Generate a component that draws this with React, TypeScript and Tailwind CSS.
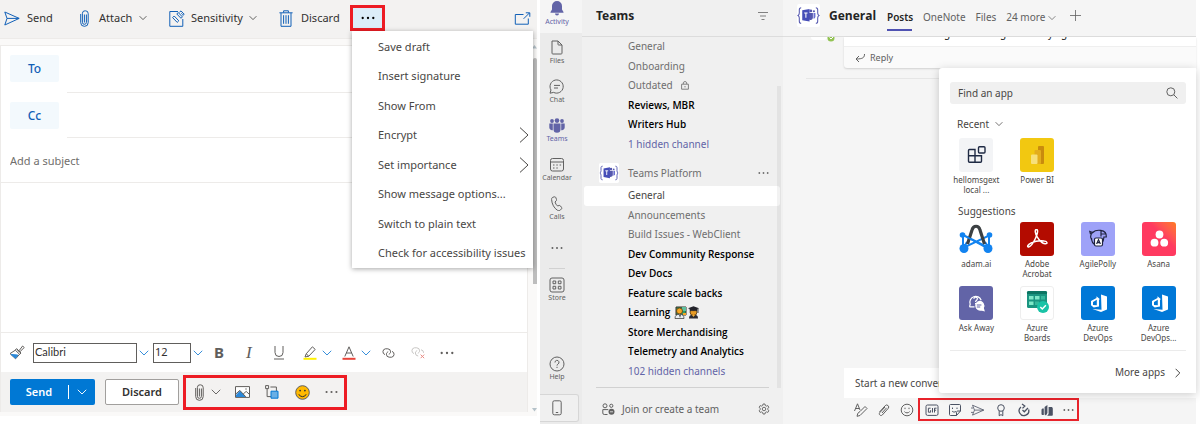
import React from "react";

type IconProps = {
  w: number;
  h: number;
  box?: string;
  className?: string;
  sw?: number;
  children: React.ReactNode;
};

function Icon({ w, h, box, className = "", sw = 1, children }: IconProps) {
  return (
    <svg
      width={w}
      height={h}
      viewBox={box ?? `0 0 ${w} ${h}`}
      fill="none"
      stroke="currentColor"
      strokeWidth={sw}
      className={`shrink-0 ${className}`}
      aria-hidden="true"
    >
      {children}
    </svg>
  );
}

const Chevron = ({ className = "", size = 8 }: { className?: string; size?: number }) => (
  <Icon w={size} h={size} box="0 0 8 8" className={className} sw={0.75}>
    <path d="M.6 2.2 4 5.6 7.4 2.2" />
  </Icon>
);

const Dots = ({ className = "", w = 14 }: { className?: string; w?: number }) => (
  <Icon w={w} h={4} box="0 0 14 4" className={className}>
    <g fill="currentColor" stroke="none">
      <circle cx="1.7" cy="2" r="1.15" />
      <circle cx="7" cy="2" r="1.15" />
      <circle cx="12.3" cy="2" r="1.15" />
    </g>
  </Icon>
);

const Clip = ({ className = "" }: { className?: string }) => (
  <Icon w={9} h={17} className={className} sw={1}>
    <path d="M6.4 4.5v7.8a2 2 0 0 1-4 0V3.4a2.6 2.6 0 0 1 2.6-2.6h.4A2.8 2.8 0 0 1 8.2 3.6v9a3.6 3.6 0 0 1-7.5 0V4M4.4 4.5v8" />
  </Icon>
);

/* ---------------------------- Mail composer ---------------------------- */

const menuItems = [
  { label: "Save draft" },
  { label: "Insert signature" },
  { label: "Show From" },
  { label: "Encrypt", sub: true },
  { label: "Set importance", sub: true },
  { label: "Show message options..." },
  { label: "Switch to plain text" },
  { label: "Check for accessibility issues" },
];

function MoreMenu() {
  return (
    <ul className="absolute left-[2px] top-[31px] z-10 grid h-[237px] w-[181px] auto-rows-fr bg-white pt-px shadow-[0_1px_5px_rgba(0,0,0,0.35)]">
      {menuItems.map((m) => (
        <li key={m.label} className="flex">
          <button className="flex w-full items-center justify-between whitespace-nowrap pl-[26px] pr-[9px] text-left text-[11px] text-[#484644]">
            {m.label}
            {m.sub && (
              <Icon w={10} h={16} sw={1} className="-mr-[3px]">
                <path d="M1 .6 9 8 1 15.4" />
              </Icon>
            )}
          </button>
        </li>
      ))}
    </ul>
  );
}

function MailToolbar() {
  return (
    <header className="flex h-[38px] items-start bg-[#f3f2f1] pl-1 text-[11px] text-[#323130]">
      <button className="flex h-9 w-[76px] items-center gap-[7px]">
        <Icon w={16} h={15} className="text-[#1160b7]">
          <path d="M.8 1 15.2 7.4.8 14 3 7.4zM3 7.4h12" />
        </Icon>
        Send
      </button>
      <button className="flex h-9 w-[89px] items-center gap-[7px]">
        <span className="flex w-3">
          <Clip className="text-[#1160b7]" />
        </span>
        Attach
        <Chevron />
      </button>
      <button className="flex h-9 w-[110px] items-center gap-[6px]">
        <Icon w={16} h={17} className="text-[#1160b7]">
          <path d="M9 1.5H.8v14.8h13V9" />
          <path d="m3.6 7.6 1.6-1.6 4.6 4.8-1.6 1.6zM7.8 4l1.4-1.5 4.2 4.4L12 8.3zM10.4 2.3 12 .9l3.2 3.4-1.6 1.4M12.3 3.3l1.4 1.4" />
        </Icon>
        Sensitivity
        <Chevron />
      </button>
      <button className="flex h-9 w-[71px] items-center gap-[8px]">
        <Icon w={14} h={17} className="text-[#1160b7]">
          <path d="M.4 2.8h13.2M4.6 2.6V.8h4.8v1.8M2 3v13.3h10V3M4.6 5.2v8.6M7 5.2v8.6M9.4 5.2v8.6" />
        </Icon>
        Discard
      </button>
      <div className="relative pt-[5px]">
        <button
          aria-label="More options"
          className="flex h-[26px] w-[35px] items-center justify-center border-[3px] border-[#ed1c24] bg-[#dcedf9]"
        >
          <Dots className="text-black" />
        </button>
        <MoreMenu />
      </div>
      <button aria-label="Open in new window" className="ml-auto mr-[6px] flex h-9 items-center">
        <Icon w={17} h={13} className="text-[#1160b7]">
          <path d="M9.5 2.5H1.3v9.7h13V6.500M9.600 6.800 15.400 1M11.800.8h4v4" />
        </Icon>
      </button>
    </header>
  );
}

function FormatBar() {
  return (
    <div className="flex h-10 items-center border-t border-[#edebe9] pl-2 text-[#605e5c]">
      <button aria-label="Format painter" className="w-6">
        <Icon w={16} h={15}>
          <path d="m8 4.5 3 3.2M10 5.8 13.6 1l1.6 1.5-4.4 4.4M7.6 3.6 12 8l-1.3 1.4-4.5-4.3zM6 5.4 1 8.6l5.6 5.2 4-4.6" />
          <path d="m2 9.4 4.5 3.8 2.4-3.1z" fill="#2b88d8" stroke="#2b88d8" />
        </Icon>
      </button>
      <label className="flex w-[120px] items-center gap-[2px] text-[#2b88d8]">
        <select
          aria-label="Font"
          className="h-5 w-[104px] appearance-none border border-[#605e5c] bg-white px-px font-['Lato','Carlito',sans-serif] text-[11px] text-[#323130]"
        >
          <option>Calibri</option>
        </select>
        <Chevron size={10} />
      </label>
      <label className="flex w-[61px] items-center gap-[2px] text-[#2b88d8]">
        <select
          aria-label="Font size"
          className="h-5 w-[38px] appearance-none border border-[#605e5c] bg-white px-px text-[11px] text-[#323130]"
        >
          <option>12</option>
        </select>
        <Chevron size={10} />
      </label>
      <button className="w-[30px] text-left text-[15px] font-bold">B</button>
      <button className="w-[30px] pl-[2px] text-left font-['Liberation_Serif',serif] text-[17px] italic">I</button>
      <button aria-label="Underline" className="w-[29px]">
        <Icon w={10} h={14}>
          <path d="M1 0v6.500a4 4 0 0 0 8 0V0M0 13h10" />
        </Icon>
      </button>
      <button aria-label="Highlight" className="w-[19px]">
        <Icon w={14} h={14}>
          <path d="m3.200 7.800 6.200-7 2.800 2.600-6.400 6.800zM3.200 7.800 2 11l3.800-.8" />
          <path d="M.5 12.800h13" stroke="#fff100" strokeWidth="2" />
        </Icon>
      </button>
      <Chevron size={10} className="text-[#2b88d8]" />
      <button aria-label="Font color" className="ml-[10px] w-[19px]">
        <Icon w={14} h={14}>
          <path d="M2.800 10.500 7 .8l4.200 9.700M4.200 7h5.600" />
          <path d="M.5 12.800h13" stroke="#e8443a" strokeWidth="2" />
        </Icon>
      </button>
      <Chevron size={10} className="text-[#2b88d8]" />
      <button aria-label="Insert link" className="ml-[10px] w-[29px]">
        <Icon w={15} h={10}>
          <path d="M4 6.600a3 3 0 0 1 .4-5.800h2.400a3 3 0 0 1 2.800 3c0 1.300-.8 2-1.800 2.400" />
          <path d="M11 3.400a3 3 0 0 1-.4 5.800H8.200a3 3 0 0 1-2.800-3c0-1.300.8-2 1.800-2.400" />
        </Icon>
      </button>
      <button aria-label="Remove link" className="w-[30px] text-[#c8c6c4]">
        <Icon w={15} h={13}>
          <path d="M4 7.600a3 3 0 0 1 .4-5.800h2.400a3 3 0 0 1 2.800 3c0 1.300-.8 2-1.800 2.400" />
          <path d="M13.600 6.800a3 3 0 0 0-2.600-3M8.200 10a3 3 0 0 1-2.800-3c0-1.300.8-2 1.800-2.400" />
          <path d="m10.600 8.600 3.600 3.600M14.200 8.600l-3.600 3.600" stroke="#e88a84" />
        </Icon>
      </button>
      <button aria-label="More formatting">
        <Dots />
      </button>
    </div>
  );
}

function SendBar() {
  return (
    <div className="flex h-10 items-center bg-[#f3f2f1] pl-[9px] text-[11px] font-semibold">
      <div className="flex h-[26px] w-[85px] items-center rounded-[2px] bg-[#0078d4] text-white">
        <button className="h-[14px] w-[59px] border-r border-white text-center leading-[14px]">Send</button>
        <button aria-label="Send options" className="flex flex-1 justify-center">
          <Chevron size={10} />
        </button>
      </div>
      <button className="ml-[10px] h-[26px] w-[74px] rounded-[2px] border border-[#a19f9d] bg-white text-[#323130]">
        Discard
      </button>
      <div className="ml-1 flex h-[35px] w-[164px] items-center border-[3px] border-[#ed1c24] pl-[9px] text-[#605e5c]">
        <button aria-label="Attach file" className="flex w-[16px]">
          <Clip />
        </button>
        <Chevron size={10} />
        <button aria-label="Insert picture" className="ml-[14px] flex w-[30px]">
          <Icon w={15} h={12}>
            <path d="M.5.6h14v10.800H.5z" fill="#fff" />
            <path d="m1 9 4-4.400 6 6.400H1z" fill="#2b88d8" stroke="none" />
            <path d="m.8 8 4-3.600 6 6.400M8.200 8l3-2.600 3 2.800" />
            <circle cx="11" cy="3" r=".7" fill="currentColor" stroke="none" />
          </Icon>
        </button>
        <button aria-label="Loop components" className="flex w-[30px]">
          <Icon w={14} h={14}>
            <path d="M.6.6h3v3h-3zM2.100 4v7.600H6M5.400 2h6v4" />
            <path d="M6 6.200h7v7H6z" fill="#69afe5" stroke="#0078d4" />
          </Icon>
        </button>
        <button aria-label="Insert emoji" className="flex w-[30px]">
          <Icon w={15} h={15}>
            <circle cx="7.500" cy="7.500" r="6.800" fill="#ffb900" stroke="#605e5c" />
            <path d="M3.800 9.200a4 4 0 0 0 7.400 0" stroke="#323130" />
            <circle cx="5.100" cy="5.600" r=".9" fill="#323130" stroke="none" />
            <circle cx="9.900" cy="5.600" r=".9" fill="#323130" stroke="none" />
          </Icon>
        </button>
        <button aria-label="More">
          <Dots w={13} />
        </button>
      </div>
    </div>
  );
}

function MailComposer() {
  return (
    <section className="flex flex-col bg-[#faf9f8] pb-1 font-['Noto_Sans','Open_Sans',sans-serif]">
      <MailToolbar />
      <div className="flex border-t border-[#edebe9] pt-[6px]">
        <div className="min-w-0 flex-1 border-l border-r border-t border-[#edebe9] bg-white">
          <div className="flex pl-[9px] pt-[9px]">
            <button className="h-[27px] w-[49px] rounded-[2px] bg-[#f3f9fd] text-[12px] font-medium text-[#1160b7]">To</button>
            <input aria-label="To" className="ml-2 h-[38px] min-w-0 flex-1 border-b border-[#edebe9] outline-none" />
          </div>
          <div className="flex pl-[9px] pt-[9px]">
            <button className="h-[27px] w-[49px] rounded-[2px] bg-[#f3f9fd] text-[12px] font-medium text-[#1160b7]">Cc</button>
            <input aria-label="Cc" className="ml-2 h-9 min-w-0 flex-1 border-b border-[#edebe9] outline-none" />
          </div>
          <input
            aria-label="Subject"
            placeholder="Add a subject"
            className="block h-[45px] w-full border-b border-[#edebe9] pl-[9px] text-[11px] outline-none placeholder:text-[#706e6c]"
          />
          <textarea aria-label="Message" className="block h-[149px] w-full resize-none outline-none" />
          <FormatBar />
          <SendBar />
        </div>
        <div className="flex w-[9px] flex-col items-end">
          <svg width="5" height="4" className="text-[#b5c2c9]" aria-hidden="true">
            <path d="M0 3.5 2.5 0 5 3.5z" fill="currentColor" />
          </svg>
          <div className="mt-[9px] h-[226px] w-1 rounded-t-[2px] bg-[#bdbdbd]" />
          <svg width="5" height="4" className="mt-auto text-[#b5c2c9]" aria-hidden="true">
            <path d="M0 0h5L2.500 3.500z" fill="currentColor" />
          </svg>
        </div>
      </div>
    </section>
  );
}

/* -------------------------------- Teams -------------------------------- */

const railItems = [
  {
    label: "Files",
    icon: <path d="M3 1h6l4 4v8.2c0 .5-.4.8-.8.8H3.8c-.5 0-.8-.3-.8-.8zM9 1v3.4c0 .4.2.6.6.6H13" />,
  },
  {
    label: "Chat",
    icon: <path d="M1 14.2 2 11A6.6 6.6 0 1 1 4.6 13.4zM5 6.4h6M5 9h4" />,
  },
  {
    label: "Teams",
    active: true,
    icon: (
      <g fill="currentColor" stroke="none">
        <circle cx="8" cy="2.600" r="2.300" />
        <circle cx="3" cy="3" r="1.900" />
        <circle cx="13" cy="3" r="1.900" />
        <path d="M4.500 5.600h7v5.600a3.500 3.500 0 0 1-7 0zM.3 5.600h3.500v6.600C1.800 12.600.3 11.200.3 9.600zM15.700 5.600h-3.500v6.600c2 .4 3.500-1 3.500-2.600z" />
      </g>
    ),
  },
  {
    label: "Calendar",
    icon: (
      <>
        <rect x="1.500" y="1.500" width="13" height="12.500" rx="2" />
        <path d="M1.500 5h13M4 8h1.500M7.300 8h1.500M10.600 8h1.500M4 11h1.500M7.300 11h1.500" />
      </>
    ),
  },
  {
    label: "Calls",
    icon: (
      <path d="M4 1.200 5.600.8c.6 0 1 .2 1.200.8l.7 1.900c.2.5 0 1-.4 1.400L6 6c.4 1.500 1.300 3 2.600 4l1.500-.5c.5-.2 1 0 1.300.4l1.200 1.600c.3.5.3 1-.1 1.400l-1 1c-.8.8-2 1-3 .4C5.200 12.300 2.800 8 2.600 3.600 2.500 2.400 3 1.500 4 1.200z" />
    ),
  },
];

function Rail() {
  return (
    <nav className="flex w-[42px] shrink-0 flex-col items-center bg-[#ebebeb] text-[7px] leading-[10px] text-[#616161]">
      <button className="flex h-[33px] w-full flex-col items-center justify-end bg-[#f5f5f5] pb-[6px] pr-2 text-[#6264a7]">
        <Icon w={14} h={15}>
          <path d="M7 0a5 5 0 0 1 5 5v3.500l1.500 2.500v.8H.5V11L2 8.500V5a5 5 0 0 1 5-5zM5 12.600h4a2 2 0 0 1-4 0z" fill="currentColor" stroke="none" />
        </Icon>
        <span className="mt-px">Activity</span>
      </button>
      {railItems.map((r) => (
        <button
          key={r.label}
          className={`flex h-[39px] w-full flex-col items-center pr-2 pt-[7px] ${r.active ? "text-[#6264a7]" : ""}`}
        >
          <Icon w={16} h={15}>
            {r.icon}
          </Icon>
          <span className="mt-px">{r.label}</span>
        </button>
      ))}
      <button aria-label="More apps" className="flex h-10 w-full items-center justify-center pr-2">
        <Dots w={12} />
      </button>
      <hr className="mr-2 w-4 border-[#d1d1d1]" />
      <button className="mt-[8px] flex w-full flex-col items-center pr-2">
        <Icon w={16} h={16}>
          <rect x="1" y="1" width="14" height="14" rx="2" />
          <path d="M4 4h2.700v2.700H4zM9.300 4H12v2.700H9.300zM4 9.300h2.700V12H4zM9.300 9.300H12V12H9.300z" />
        </Icon>
        Store
      </button>
      <button className="mt-auto flex w-full flex-col items-center pb-[12px] pr-2">
        <Icon w={16} h={16}>
          <circle cx="8" cy="8" r="7" />
          <path d="M6 6.500a2 2 0 1 1 3 1.600c-.7.400-1 .8-1 1.500M8 10.800v1.200" />
        </Icon>
        Help
      </button>
      <button
        aria-label="Get the mobile app"
        className="mb-[2px] flex h-7 w-[39px] items-center justify-center self-start rounded-r-[3px] border border-l-0 border-[#d6d6d6] bg-[#f0f0f0] pr-1"
      >
        <Icon w={10} h={16}>
          <rect x=".8" y=".8" width="8.400" height="14" rx="1.500" />
          <path d="M3.800 12.500h2.400" />
        </Icon>
      </button>
    </nav>
  );
}

const Lock = () => (
  <Icon w={8} h={9} className="text-[#808080]">
    <path d="M.6 3.200h6.800v5H.6zM2.300 3V1.800C2.300.2 5.700.2 5.700 1.800V3M4 5v1.400" />
  </Icon>
);

const LearnEmoji = () => (
  <svg width="26" height="13" viewBox="0 0 26 13" aria-hidden="true">
    <path d="M2 1h10v8H2z" fill="#2e9c68" stroke="#3a3029" />
    <path d="M8 1h4v4H8z" fill="#5fc0a0" />
    <circle cx="5.500" cy="5" r="3" fill="#f7a823" stroke="#5a3b13" strokeWidth=".8" />
    <path d="M1 12.500c0-3 1.500-4.200 4.500-4.200s4.500 1.200 4.500 4.200z" fill="#e9eef2" stroke="#444" strokeWidth=".8" />
    <path d="m5 9 1 3 1-3z" fill="#555" />
    <path d="M9 7h3v2H9z" fill="#f7a823" />
    <path d="M15 12.500c0-3 1.500-4 4.500-4s4.500 1 4.500 4z" fill="#2b2b33" />
    <circle cx="19.500" cy="6" r="3.500" fill="#e89b25" stroke="#4c3411" strokeWidth=".8" />
    <path d="M14 2.200 19.500.3 25 2.200 19.500 4.500z" fill="#24242b" />
    <path d="M16 3h7v1.600h-7zM24 2.500V7" fill="#24242b" stroke="#24242b" strokeWidth=".8" />
    <path d="m18 9 1.500 2L21 9z" fill="#f2b13d" />
  </svg>
);

const TeamLogo = ({ size }: { size: number }) => (
  <svg width={size} height={size} viewBox="0 0 22 22" className="shrink-0" aria-hidden="true">
    <rect width="22" height="22" rx="2" fill="#fff" />
    <path
      d="M4 3.500c-1.600 0-1.800.8-1.800 2v3c0 1.300-.4 2-1.200 2.500.8.500 1.200 1.200 1.200 2.500v3c0 1.200.2 2 1.800 2M18 3.500c1.600 0 1.800.8 1.800 2v3c0 1.300.4 2 1.200 2.500-.8.500-1.200 1.200-1.200 2.500v3c0 1.200-.2 2-1.800 2"
      fill="none"
      stroke="#5558af"
      strokeWidth="1"
    />
    <circle cx="13.200" cy="6.600" r="1.400" fill="#5558af" />
    <circle cx="16.200" cy="7" r="1" fill="#5558af" />
    <path d="M11 8.600h4.200v4.800a2.500 2.500 0 0 1-4.200 1.200z" fill="#5558af" />
    <path d="M15.800 8.600h1.800v3.800a2 2 0 0 1-1.800 1.600z" fill="#6a6fd0" />
    <path d="m5 6 7-1.200v12L5 15.500z" fill="#464eb8" />
    <path d="M6.900 8.600h3.200M8.500 8.600v4.600" stroke="#fff" strokeWidth="1" />
  </svg>
);

type Channel = { name: string; kind?: "bold" | "link" | "current"; icon?: React.ReactNode };

const topChannels: Channel[] = [
  { name: "General" },
  { name: "Onboarding" },
  { name: "Outdated", icon: <Lock /> },
  { name: "Reviews, MBR", kind: "bold" },
  { name: "Writers Hub", kind: "bold" },
  { name: "1 hidden channel", kind: "link" },
];

const platformChannels: Channel[] = [
  { name: "General", kind: "current" },
  { name: "Announcements" },
  { name: "Build Issues - WebClient" },
  { name: "Dev Community Response", kind: "bold" },
  { name: "Dev Docs", kind: "bold" },
  { name: "Feature scale backs", kind: "bold" },
  { name: "Learning", kind: "bold", icon: <LearnEmoji /> },
  { name: "Store Merchandising", kind: "bold" },
  { name: "Telemetry and Analytics", kind: "bold" },
  { name: "102 hidden channels", kind: "link" },
];

const channelStyle = {
  plain: "text-[#6e6e6e]",
  bold: "font-['Open_Sans','Noto_Sans',sans-serif] font-semibold text-black",
  link: "text-[#6264a7]",
  current: "rounded-[3px] bg-white text-[#484644]",
};

function ChannelList({ items, className }: { items: Channel[]; className: string }) {
  return (
    <ul className={`grid auto-rows-fr pl-[2px] pr-[3px] ${className}`}>
      {items.map((c) => (
        <li key={c.name} className="flex">
          <a
            href="#channel"
            className={`flex w-full items-center whitespace-nowrap pl-11 ${c.icon ? (c.kind ? "gap-1" : "gap-2") : ""} ${channelStyle[c.kind ?? "plain"]}`}
          >
            {c.name}
            {c.icon}
          </a>
        </li>
      ))}
    </ul>
  );
}

function TeamsPanel() {
  return (
    <aside className="relative flex w-[201px] shrink-0 flex-col bg-[#f0f0f0] text-[10px]">
      <header className="flex h-[37px] items-center justify-between border-b border-[#dcdcdc] pb-[5px] pl-[14px] pr-[15px]">
        <h1 className="text-[12px] font-bold text-[#242424]">Teams</h1>
        <button aria-label="Filter">
          <Icon w={10} h={8} className="text-[#808080]">
            <path d="M0 .5h10M2 4h6M3.500 7.500h3" />
          </Icon>
        </button>
      </header>
      <ChannelList items={topChannels} className="h-[117px]" />
      <div className="flex h-8 items-center pl-[17px] pr-[14px] pt-[6px] text-[#6e6e6e]">
        <TeamLogo size={20} />
        <span className="ml-[9px]">Teams Platform</span>
        <button aria-label="Team options" className="ml-auto">
          <Dots w={11} />
        </button>
      </div>
      <ChannelList items={platformChannels} className="h-[195px]" />
      <div className="mx-[14px] mt-[6px] border-t border-[#d1d1d1]" />
      <footer className="flex h-9 items-center pl-[20px] pr-[13px] pt-[6px] text-[#616161]">
        <Icon w={13} h={12}>
          <circle cx="3" cy="2.800" r="2" />
          <circle cx="9.300" cy="2.800" r="1.600" />
          <path d="M5.500 11.500H2.300A1.500 1.500 0 0 1 .8 10V6.600h5.500" />
          <circle cx="9.500" cy="8.800" r="3" fill="currentColor" stroke="none" />
          <path d="M8 8.800h3" stroke="#f0f0f0" strokeWidth=".8" />
        </Icon>
        <button className="ml-[7px]">Join or create a team</button>
        <button aria-label="Settings" className="ml-auto">
          <Icon w={12} h={12} box="0 0 24 24" sw={1.800}>
            <circle cx="12" cy="12" r="3.500" />
            <path d="m10 2-.6 3-2.200 1.200-2.900-1L2.200 8.700 4.500 10.800v2.400l-2.300 2.100 2.100 3.500 2.900-1L9.400 19l.6 3h4l.6-3 2.200-1.200 2.900 1 2.100-3.500-2.300-2.100v-2.400l2.300-2.100-2.100-3.500-2.900 1L14.600 5 14 2z" />
          </Icon>
        </button>
      </footer>
      <div className="absolute right-[2px] top-[86px] h-[302px] w-1 bg-black/5" />
    </aside>
  );
}

const tabs = ["OneNote", "Files"];

function ChannelHeader() {
  return (
    <header className="flex h-[37px] items-center border-b border-[#dedede] pb-[5px] pl-[14px] text-[10px] text-[#616161]">
      <TeamLogo size={23} />
      <h2 className="ml-[9px] w-[58px] font-['Open_Sans','Noto_Sans',sans-serif] text-[12px] font-bold text-[#242424]">General</h2>
      <a href="#posts" className="relative mt-1 w-9 font-semibold text-[#242424]">
        Posts
        <span className="absolute -bottom-[6px] left-0 h-[2px] w-[25px] bg-[#4f52b2]" />
      </a>
      {tabs.map((t) => (
        <a key={t} href="#tab" className="mt-1 mr-[10px]">
          {t}
        </a>
      ))}
      <button className="mt-1 flex items-center gap-[3px] whitespace-nowrap">
        24 more
        <Chevron />
      </button>
      <button aria-label="Add a tab" className="ml-[14px]">
        <Icon w={11} h={11}>
          <path d="M5.500 0v11M0 5.500h11" strokeWidth=".8" />
        </Icon>
      </button>
    </header>
  );
}

type AppEntry = { name: string; tile: string; art: React.ReactNode };

const DevOps = () => (
  <svg width="34" height="34" viewBox="0 0 34 34" aria-hidden="true">
    <path d="m20 8.500 6 2v13l-6 2.500-8.500-3 9 .8z" fill="#fff" />
    <path d="m10 15 5.500-3v-1.700l3.500 3-1 .3v6.900l-5.300 1-2.700-2.300zm2 .9v3.200l3.800.2v-5.600z" fill="#fff" fillRule="evenodd" />
  </svg>
);

const recent: AppEntry[] = [
  {
    name: "hellomsgext local ...",
    tile: "bg-[#f3f4f6]",
    art: (
      <svg width="34" height="34" fill="none" stroke="#1f2a44" strokeWidth="1.400" aria-hidden="true">
        <path d="M10.500 11.500H16v12.700h-5.500a1 1 0 0 1-1-1V12.500a1 1 0 0 1 1-1zM9.500 17.800h13v5.400a1 1 0 0 1-1 1H16" />
        <rect x="19.500" y="8.800" width="6.500" height="6.200" rx="1" />
      </svg>
    ),
  },
  {
    name: "Power BI",
    tile: "bg-[#f2c811]",
    art: (
      <svg width="34" height="34" aria-hidden="true">
        <rect x="18" y="8" width="6" height="18" rx="1" fill="#c98b0d" />
        <rect x="14.500" y="12" width="6.500" height="14" rx="1" fill="#e3ad1d" />
        <rect x="11" y="16.500" width="6.500" height="9.500" rx="1" fill="#f7e07a" />
      </svg>
    ),
  },
];

const suggestions: AppEntry[] = [
  {
    name: "adam.ai",
    tile: "bg-white",
    art: (
      <svg width="34" height="34" fill="none" aria-hidden="true">
        <path d="M4 13v13l26-12.500V26L4 13M4.500 26 8 20M30 26l-4-6" stroke="#1283f0" strokeWidth="2" />
        <path d="M8.500 22 13 8c1.300-5 6.800-5 8 0l4.500 14" stroke="#3c4043" strokeWidth="3.200" />
        <path d="m8 15 18 10" stroke="#1283f0" strokeWidth="1.800" />
        <g fill="#1283f0">
          <circle cx="3.500" cy="13" r="2.800" />
          <circle cx="30.500" cy="13" r="2.800" />
          <circle cx="5" cy="26.500" r="4.500" />
          <circle cx="29" cy="26.500" r="4.500" />
        </g>
      </svg>
    ),
  },
  {
    name: "Adobe Acrobat",
    tile: "bg-[#b30b00]",
    art: (
      <svg width="34" height="34" fill="none" stroke="#fff" strokeWidth="1.500" aria-hidden="true">
        <path d="M16.500 7.500c-2 0-1.500 4 .8 7.600 2.200 3.500 5.200 6.400 7.800 6.700 2.800.3 2.500-2.600-1-2.900-4.200-.5-9.400.4-12.900 2-3.800 1.700-4.400 4.400-2.500 4 2-.4 4.800-4.400 6.700-8.400 1.800-3.600 3.300-9 1.100-9z" />
      </svg>
    ),
  },
  {
    name: "AgilePolly",
    tile: "bg-[#9ea2f8]",
    art: (
      <svg width="34" height="34" fill="none" stroke="#1f2340" strokeWidth="1.200" aria-hidden="true">
        <path d="M9.500 12 8.800 9.500l3 1c2-2.200 5-2.500 8-2.100 3.500.5 5.800 3 5.500 6.600h-3M10.500 17.500C8.500 14 10 10.500 14 9M10.500 16c0 4 2 6 4 7M20 8.500v6M20 12h5M23 15c-.4 3-1 5-2 6" />
        <rect x="13.500" y="16" width="8" height="8" rx="1.500" fill="#fff" />
        <path d="m15.600 22 1.900-4.300 1.900 4.300M16.300 20.700h2.400" />
      </svg>
    ),
  },
  {
    name: "Asana",
    tile: "bg-gradient-to-tr from-[#ff3a60] from-60% to-[#ff7a1a]",
    art: (
      <svg width="34" height="34" fill="#fff" aria-hidden="true">
        <circle cx="17.500" cy="12.500" r="3.900" />
        <circle cx="12.500" cy="20.700" r="3.900" />
        <circle cx="22.200" cy="20.700" r="3.900" />
      </svg>
    ),
  },
  {
    name: "Ask Away",
    tile: "bg-[#6264a7]",
    art: (
      <svg width="34" height="34" fill="none" stroke="#fff" strokeWidth="1.200" aria-hidden="true">
        <path d="m10.500 20.800.7-2.600a5.800 5.800 0 1 1 11-4M10.500 20.800h5" />
        <path d="M14.800 12.800c.3-2.200 3.800-1.900 3.600.1-.2 1.400-1.800 1.300-1.800 3M16.600 17v1.300" />
        <path d="M20 15.500a4.300 4.300 0 0 1 4.200 6.400l.8 2.800-2.600-.8a4.300 4.300 0 1 1-2.400-8.400z" fill="#fff" />
        <path d="M17.800 19h4.600M17.800 21h3.400" stroke="#6264a7" />
      </svg>
    ),
  },
  {
    name: "Azure Boards",
    tile: "bg-white border border-[#eeeeee]",
    art: (
      <svg width="34" height="34" aria-hidden="true">
        <rect x="6" y="5" width="20" height="17" rx="1.500" fill="#1a9480" />
        <path d="M6 6.500A1.500 1.500 0 0 1 7.500 5h17A1.500 1.500 0 0 1 26 6.500V8H6z" fill="#0c7563" />
        <path d="M8 10h4.500v3.500H8zM8 15.500h4.500V19H8zM14 10h4.500v3.500H14z" fill="#7fe8c8" />
        <path d="M20 10h4v3.500h-4zM14 15.500h4V19h-4z" fill="#36b89c" />
        <circle cx="22" cy="21" r="6" fill="#19c3a6" />
        <path d="m19.300 21 2 2 3.600-3.800" fill="none" stroke="#fff" strokeWidth="1.500" />
      </svg>
    ),
  },
  { name: "Azure DevOps", tile: "bg-[#0078d7]", art: <DevOps /> },
  { name: "Azure DevOps...", tile: "bg-[#0078d7]", art: <DevOps /> },
];

function AppGrid({ apps, className = "" }: { apps: AppEntry[]; className?: string }) {
  return (
    <div className={`grid grid-cols-4 ${className}`}>
      {apps.map((a) => (
        <button key={a.name} className="flex h-16 flex-col items-center">
          <span className={`flex size-[34px] items-center justify-center overflow-hidden rounded-[3px] ${a.tile}`}>{a.art}</span>
          <span className="mt-[3px] w-12 text-center text-[8px] leading-[10px] text-[#484644]">{a.name}</span>
        </button>
      ))}
    </div>
  );
}

function AppPicker() {
  return (
    <div className="absolute right-0 top-[68px] h-[325px] w-[257px] rounded-l-[3px] bg-white pt-[14px] text-[10px] text-[#484644] shadow-[0_2px_10px_rgba(0,0,0,0.2)]">
      <label className="ml-[11px] mr-[10px] flex h-[22px] items-center rounded-[3px] bg-[#f0f0f0] pl-2 pr-2">
        <input
          aria-label="Find an app"
          placeholder="Find an app"
          className="min-w-0 flex-1 bg-transparent outline-none placeholder:text-[#484644]"
        />
        <Icon w={12} h={12} className="text-[#616161]">
          <circle cx="4.800" cy="4.800" r="4" />
          <path d="m7.800 7.800 3.600 3.600" />
        </Icon>
      </label>
      <button className="ml-[18px] mt-[13px] flex h-[14px] items-center gap-[6px]">
        Recent
        <Chevron />
      </button>
      <AppGrid apps={recent} className="mx-[7px] mt-[7px]" />
      <h3 className="ml-[19px] mt-[2px] h-[18px] leading-[14px]">Suggestions</h3>
      <AppGrid apps={suggestions} className="mx-[7px]" />
      <hr className="ml-[11px] mr-[10px] border-[#ebebeb]" />
      <a href="#apps" className="mt-[14px] flex items-center justify-end gap-[10px] pr-[15px]">
        More apps
        <Icon w={6} h={10}>
          <path d="m.6.8 4.200 4.200L.6 9.200" />
        </Icon>
      </a>
    </div>
  );
}

const plainTools = [
  {
    label: "Format",
    icon: <path d="M.5 8 3.500.8 6 7M1.600 5.500h3.600M6 8.500l5-5 2 2-7 7-3 .8.800-3z" />,
  },
  {
    label: "Attach",
    icon: <path d="m2.500 9 5.700-6.300a2 2 0 0 1 3 2.700L5.300 12c-1.500 1.500-4-.5-2.600-2.300L8 4M5 10l4.600-5.200" />,
  },
  {
    label: "Emoji",
    icon: (
      <>
        <circle cx="7" cy="7" r="5.800" />
        <path d="M4.400 8.600c1.200 1.700 4 1.700 5.200 0M5 4.700v1.400M9 4.700v1.400" />
      </>
    ),
  },
];

const extensionTools = [
  {
    label: "GIF",
    icon: (
      <>
        <rect x="1" y="2" width="12" height="10.400" rx="1.500" />
        <path d="M5.600 5.200H3.400v4h2.200v-2M7.500 5v4.500M9.500 9.500V5.200h2M9.500 7.200h1.600" />
      </>
    ),
  },
  {
    label: "Sticker",
    icon: <path d="M2.500 1.500h9c.6 0 1 .4 1 1V8l-4 4.500h-6c-.6 0-1-.4-1-1v-9c0-.6.400-1 1-1zM12.500 8H10c-1 0-1.500.5-1.500 1.500v3M4.500 4.600V6M9 4.600V6M4 8c.8 1 2.500 1.500 4 .5" />,
  },
  {
    label: "Send",
    icon: <path d="m1.500 2.200 11.300 4.900-11.300 5 2-5zM3.500 7.100h9M0 5h2M0 9.400h2" strokeWidth=".8" />,
  },
  {
    label: "Praise",
    icon: (
      <>
        <circle cx="7" cy="5" r="3.300" />
        <path d="M5.200 8v4.800l1.800-1.200 1.800 1.200V8" />
      </>
    ),
  },
  {
    label: "Updates",
    icon: <path d="M4 4a4.800 4.800 0 1 0 7.600 2.500M5 1l2.800 2-2.300 2.400M5.500 7l1.800 1.800 3.700-3.800" strokeWidth="1.300" />,
  },
  {
    label: "Approvals",
    icon: (
      <g fill="currentColor" stroke="none">
        <path d="M1.500 7c0-1 .7-1.500 1.500-1.500h.8V12H2.500a1 1 0 0 1-1-1zM4.600 4 7.400 2v8L6 12.500l-1.400-1zM8.600 4h2.600c1 0 1.600.7 1.600 1.700V12c0 .5-.4.8-.8.8H7.200L8.600 11z" />
      </g>
    ),
  },
];

function Conversation() {
  return (
    <main className="relative flex min-w-0 flex-1 flex-col bg-[#f5f5f5] text-[10px] text-[#616161]">
      <ChannelHeader />
      <div className="ml-[23px] flex h-[42px] border-b border-[#e6e6e6]">
        <div className="flex h-[5px] w-[38px] items-start overflow-hidden pl-[5px]">
          <span className="h-[3px] w-4 rounded-b-[3px] bg-white" />
          <svg width="8" height="5" aria-hidden="true">
            <circle cx="4" cy="1" r="3.500" fill="#92c353" />
            <path d="m2.500.5 1.500 1.500L6 0" fill="none" stroke="#fff" />
          </svg>
        </div>
        <article className="h-[31px] flex-1 rounded-bl-[3px] bg-[#fafafa] shadow-[0_1px_2px_rgba(0,0,0,0.15)]">
          <div className="flex h-[10px] items-start overflow-hidden border-b border-[#efefef] bg-white pl-[100px] text-[10px] leading-[2px] text-[#242424]">
            <span className="-mt-[5px] w-14">g</span>
            <span className="-mt-[5px] w-[48px]">g</span>
            <span className="-mt-[5px] w-[13px]">y</span>
            <span className="-mt-[5px]">g</span>
          </div>
          <button className="flex h-[21px] items-center gap-[5px] pl-[11px] text-[9px]">
            <Icon w={10} h={8}>
              <path d="M9.500 0c0 3.500-1.500 5-8.500 5M4 2 1 5l3 3" />
            </Icon>
            Reply
          </button>
        </article>
      </div>
      <input
        aria-label="Start a new conversation"
        placeholder="Start a new conversation"
        className="ml-[61px] mt-auto h-[30px] bg-white pl-[11px] outline-none placeholder:text-[#484644]"
      />
      <div className="flex h-[26px] items-center pb-[3px] pl-[66px]">
        {plainTools.map((t) => (
          <button key={t.label} aria-label={t.label} className="flex w-[23px] justify-center">
            <Icon w={14} h={14}>
              {t.icon}
            </Icon>
          </button>
        ))}
        <div className="flex h-[23px] w-[161px] items-center border-2 border-[#e8232b]">
          {extensionTools.map((t) => (
            <button key={t.label} aria-label={t.label} className="flex w-[23px] justify-center text-[#4b5263]">
              <Icon w={14} h={14}>
                {t.icon}
              </Icon>
            </button>
          ))}
          <button aria-label="More" className="ml-[5px]">
            <Dots w={11} />
          </button>
        </div>
      </div>
      <AppPicker />
    </main>
  );
}

export default function App() {
  return (
    <div className="grid grid-cols-[9fr_11fr] items-start bg-white font-['Noto_Sans','Open_Sans',sans-serif]">
      <div className="min-w-0 pr-[3px]">
        <MailComposer />
      </div>
      <div className="flex min-w-0 pr-1">
        <Rail />
        <TeamsPanel />
        <Conversation />
      </div>
    </div>
  );
}
